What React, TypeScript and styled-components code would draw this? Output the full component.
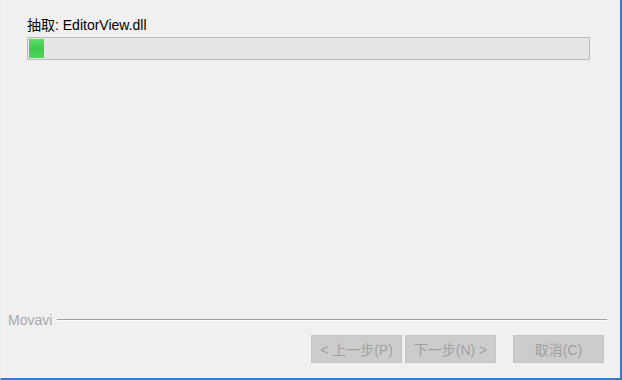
import React from "react";
import styled, { createGlobalStyle } from "styled-components";

const Global = createGlobalStyle`
  html, body { margin: 0; padding: 0; background: #f0f0f0; }
  #root { width: 622px; height: 380px; }
`;

const Window = styled.div`
  box-sizing: border-box;
  width: 622px;
  height: 380px;
  background: #f0f0f0;
  border-left: 1px solid #e9eef3;
  border-right: 2px solid #2b7fd6;
  border-bottom: 2px solid #2b7fd6;
  display: flex;
  flex-direction: column;
  font-family: "Liberation Sans", "Noto Sans CJK SC", sans-serif;
`;

const Content = styled.div`
  flex: 1;
  padding: 16px 30px 0 26px;
  display: flex;
  flex-direction: column;
  gap: 2px;
`;

const Label = styled.div`
  font-size: 14px;
  line-height: 19px;
  color: #000;
`;

const Track = styled.div`
  box-sizing: border-box;
  height: 23px;
  border: 1px solid #bcbcbc;
  background: #e6e6e6;
  padding: 1px;
  display: flex;
`;

const Chunk = styled.div`
  height: 100%;
  background: linear-gradient(#5fdc6b, #3ccc4a 50%, #4fd65c);
`;

const Footer = styled.div`
  padding: 0 16px 15px 7px;
  display: flex;
  flex-direction: column;
  gap: 6px;
`;

const Divider = styled.div`
  display: flex;
  align-items: center;
  gap: 5px;
  height: 18px;
  margin-right: -3px;
`;

const Brand = styled.span`
  font-size: 14px;
  color: #a8a8a8;
`;

const Line = styled.div`
  flex: 1;
  height: 1px;
  background: #a0a0a0;
  border-bottom: 1px solid #ffffff;
`;

const Buttons = styled.div`
  display: flex;
  justify-content: flex-end;
  gap: 3px;
`;

const Button = styled.button<{ $gap?: boolean }>`
  box-sizing: border-box;
  width: 91px;
  height: 28px;
  margin-left: ${(p) => (p.$gap ? "14px" : "0")};
  background: #cccccc;
  border: 1px solid #c4c4c4;
  color: #a0a0a0;
  font-size: 14px;
  font-family: "Liberation Sans", "Noto Sans CJK SC", sans-serif;
  padding: 0;
  cursor: default;
`;

export default function App() {
  return (
    <>
      <Global />
      <Window>
        <Content>
          <Label>抽取: EditorView.dll</Label>
          <Track>
            <Chunk style={{ width: 15 }} />
          </Track>
        </Content>
        <Footer>
          <Divider>
            <Brand>Movavi</Brand>
            <Line />
          </Divider>
          <Buttons>
            <Button disabled>&lt; 上一步(P)</Button>
            <Button disabled>下一步(N) &gt;</Button>
            <Button disabled $gap>取消(C)</Button>
          </Buttons>
        </Footer>
      </Window>
    </>
  );
}
